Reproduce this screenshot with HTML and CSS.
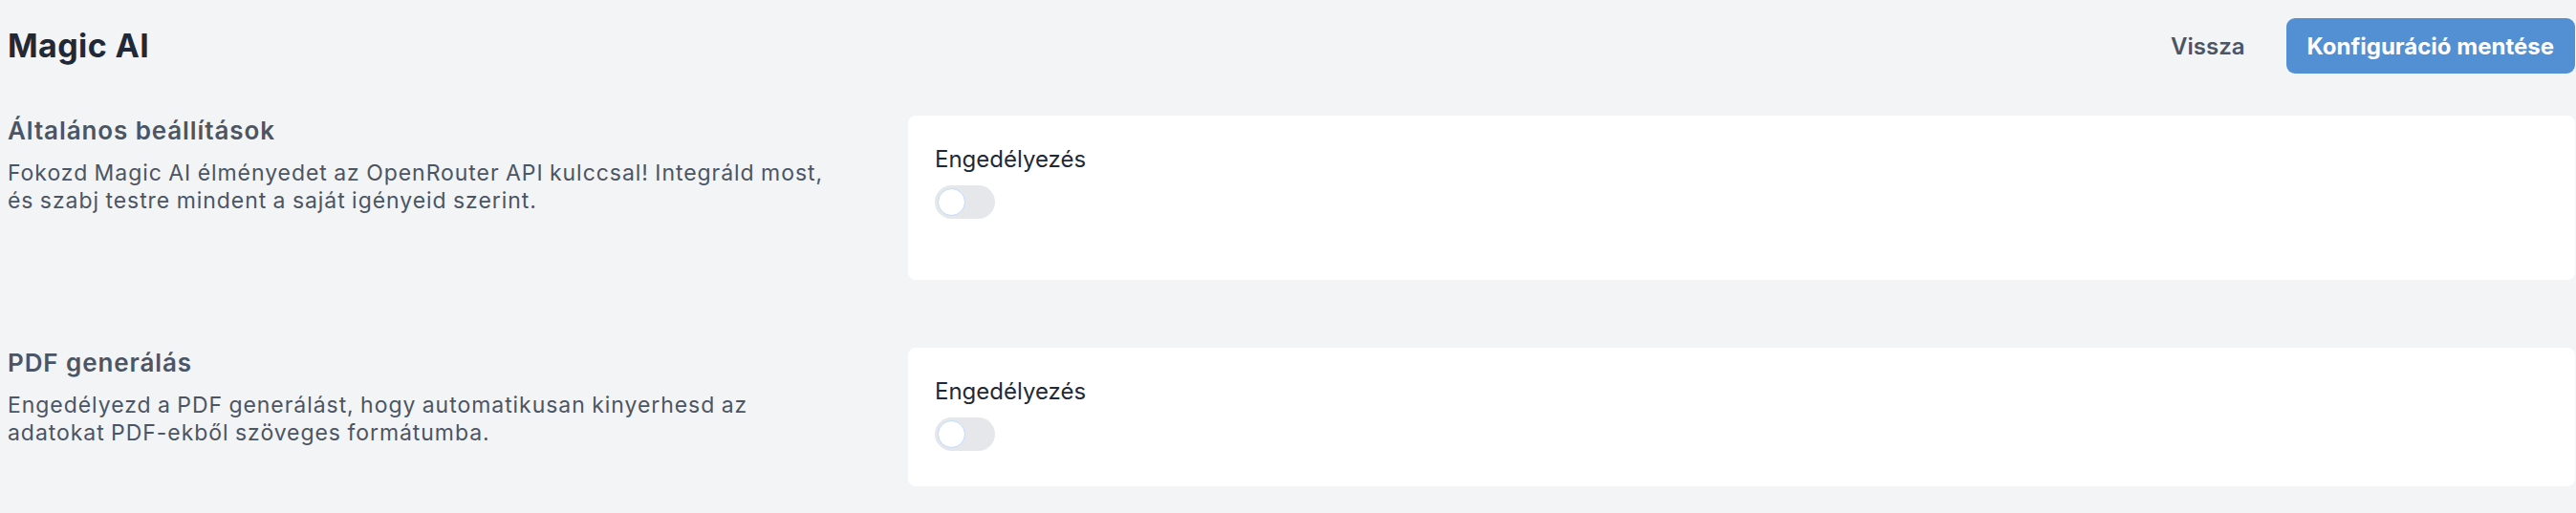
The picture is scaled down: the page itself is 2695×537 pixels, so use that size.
FILE: index.html
```html
<!DOCTYPE html>
<html lang="hu">
<head>
<meta charset="utf-8">
<title>Magic AI</title>
<link rel="stylesheet" href="styles.css">
</head>
<body>
<div class="page">
  <header class="topbar">
    <h1 class="page-title">Magic AI</h1>
    <div class="actions">
      <a class="btn-link" href="#">Vissza</a>
      <button class="btn-primary" type="button">Konfiguráció mentése</button>
    </div>
  </header>

  <section class="section section-first">
    <div class="section-info">
      <h2 class="section-title">Általános beállítások</h2>
      <p class="section-desc">Fokozd Magic AI élményedet az OpenRouter API kulccsal! Integráld most,<br>és szabj testre mindent a saját igényeid szerint.</p>
    </div>
    <div class="card card-tall">
      <div class="field-label">Engedélyezés</div>
      <span class="toggle"><span class="knob"></span></span>
    </div>
  </section>

  <section class="section">
    <div class="section-info">
      <h2 class="section-title">PDF generálás</h2>
      <p class="section-desc">Engedélyezd a PDF generálást, hogy automatikusan kinyerhesd az<br>adatokat PDF-ekből szöveges formátumba.</p>
    </div>
    <div class="card">
      <div class="field-label">Engedélyezés</div>
      <span class="toggle"><span class="knob"></span></span>
    </div>
  </section>
</div>
</body>
</html>
```

FILE: styles.css
```css
* { box-sizing: border-box; }
html, body { margin: 0; padding: 0; }
body {
  background: #f3f4f6;
  font-family: Inter, "Noto Sans", "Liberation Sans", sans-serif;
  color: #1f2937;
}
.page {
  padding: 19px 1px 0 8px;
}
.topbar {
  display: flex;
  align-items: center;
  justify-content: space-between;
  height: 58px;
}
.page-title {
  margin: 0;
  font-size: 34px;
  line-height: 40px;
  font-weight: 700;
  color: #1f2937;
  letter-spacing: 0.4px;
}
.actions {
  display: flex;
  align-items: center;
  gap: 43px;
}
.btn-link {
  font-size: 24px;
  font-weight: 600;
  color: #4b5563;
  text-decoration: none;
}
.btn-primary {
  height: 58px;
  padding: 0 22px;
  border: none;
  border-radius: 9px;
  background: #5290d3;
  color: #ffffff;
  font-family: inherit;
  font-size: 24px;
  font-weight: 700;
}
.section {
  display: grid;
  grid-template-columns: 900px 1fr;
  column-gap: 42px;
  align-items: start;
}
.section-first {
  margin-top: 44px;
  margin-bottom: 71px;
}
.section-title {
  margin: 0;
  font-size: 26px;
  line-height: 32px;
  font-weight: 600;
  color: #4b5563;
  letter-spacing: 0.9px;
}
.section-desc {
  margin: 14px 0 0;
  font-size: 23px;
  line-height: 28.5px;
  color: #4b5563;
  letter-spacing: 0.95px;
  word-spacing: -1px;
}
.card {
  background: #ffffff;
  border-radius: 8px;
  padding: 30px 28px 37px;
}
.card-tall {
  padding-bottom: 64px;
}
.field-label {
  font-size: 24px;
  line-height: 32px;
  color: #1f2937;
}
.toggle {
  display: block;
  margin-top: 11px;
  width: 63px;
  height: 35px;
  border-radius: 18px;
  background: #e5e7eb;
  padding: 3px;
}
.knob {
  display: block;
  width: 29px;
  height: 29px;
  border-radius: 50%;
  background: #ffffff;
  border: 1px solid #bfdbfe;
}
```
